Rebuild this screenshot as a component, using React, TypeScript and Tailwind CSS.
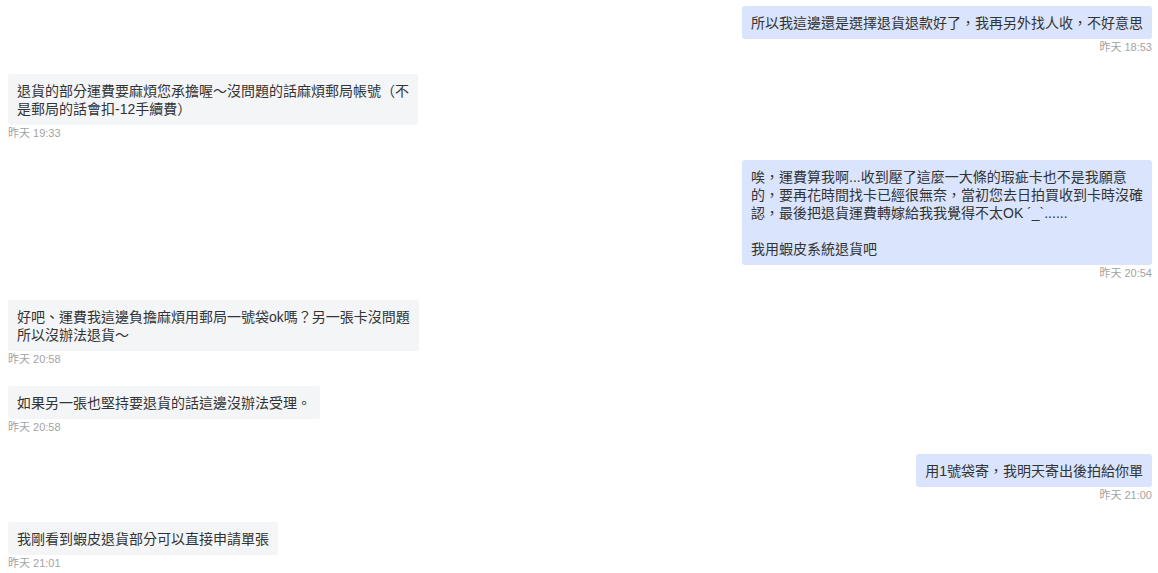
import React from "react";

type Msg = { side: "left" | "right"; text: string; time: string };

const msgs: Msg[] = [
  { side: "right", text: "所以我這邊還是選擇退貨退款好了，我再另外找人收，不好意思", time: "昨天 18:53" },
  { side: "left", text: "退貨的部分運費要麻煩您承擔喔～沒問題的話麻煩郵局帳號（不\n是郵局的話會扣-12手續費）", time: "昨天 19:33" },
  {
    side: "right",
    text: "唉，運費算我啊...收到壓了這麼一大條的瑕疵卡也不是我願意\n的，要再花時間找卡已經很無奈，當初您去日拍買收到卡時沒確\n認，最後把退貨運費轉嫁給我我覺得不太OK ´_`......\n\n我用蝦皮系統退貨吧",
    time: "昨天 20:54",
  },
  { side: "left", text: "好吧、運費我這邊負擔麻煩用郵局一號袋ok嗎？另一張卡沒問題\n所以沒辦法退貨～", time: "昨天 20:58" },
  { side: "left", text: "如果另一張也堅持要退貨的話這邊沒辦法受理。", time: "昨天 20:58" },
  { side: "right", text: "用1號袋寄，我明天寄出後拍給你單", time: "昨天 21:00" },
  { side: "left", text: "我剛看到蝦皮退貨部分可以直接申請單張", time: "昨天 21:01" },
];

export default function App() {
  return (
    <div
      className="w-[1158px] h-[573px] overflow-hidden bg-white pt-[6px] pl-2 pr-[6px]"
      style={{ fontFamily: '"Liberation Sans", "Noto Sans CJK TC", sans-serif' }}
    >
      {msgs.map((m, i) => (
        <div key={i} className={`flex flex-col mb-[20px] ${m.side === "right" ? "items-end" : "items-start"}`}>
          <div
            className={`max-w-[414px] rounded-[3px] px-[9px] py-[7.5px] text-[14px] leading-[18px] text-[#333333] whitespace-pre-line ${
              m.side === "right" ? "bg-[#dae4fc]" : "bg-[#f4f5f7]"
            }`}
          >
            {m.text}
          </div>
          <div className="mt-[2px] text-[11px] leading-[13px] text-[#a3a3a3]">{m.time}</div>
        </div>
      ))}
    </div>
  );
}
